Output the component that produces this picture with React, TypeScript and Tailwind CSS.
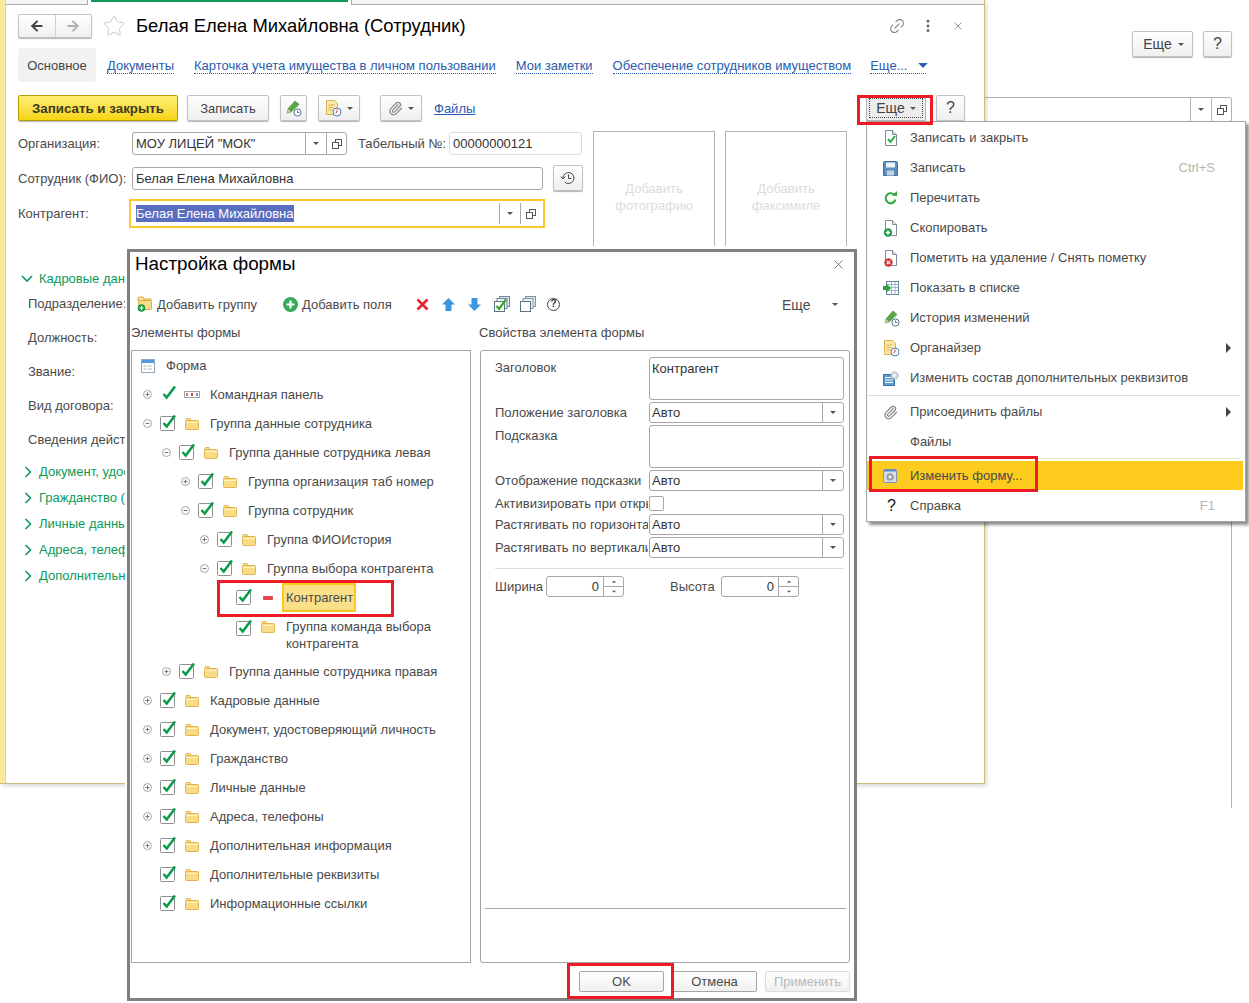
import React from 'react';
import { Link2, EllipsisVertical, X, Star, Paperclip, ArrowLeft, ArrowRight } from 'lucide-react';

// small shared bits
const Tri = ({ className = 'fill-[#555]' }: { className?: string }) => (
  <svg width="6" height="3" viewBox="0 0 7 4" preserveAspectRatio="none" className={className}><path d="M0 0h7L3.5 4z" /></svg>
);

const OpenIcon = () => (
  <svg width="10" height="10" viewBox="0 0 10 10" fill="white" stroke="#555"><rect x="3.5" y="0.5" width="6" height="6" /><rect x="0.5" y="3.5" width="6" height="6" /></svg>
);

const Folder = () => (
  <svg width="14" height="12" viewBox="0 0 14 12">
    <path d="M1 2.5V1.5Q1 .5 2 .5h3l1 2z" fill="#fbe3a0" stroke="#e2b54f" />
    <rect x="0.5" y="2.5" width="13" height="9" rx="1" fill="#fbdc86" stroke="#e2b54f" />
    <path d="M1 4.5h12" stroke="#fff3c8" />
  </svg>
);

const Check = ({ box = true }: { box?: boolean }) => (
  <svg width="18" height="20" viewBox="0 0 18 20" className="overflow-visible">
    {box && <rect x="0.5" y="5.5" width="14" height="14" rx="1" fill="white" stroke="#8f8f8f" />}
    <path d="M3.5 12l3.2 3.6L15 4.5" fill="none" stroke="#0b9a4b" strokeWidth="2.5" />
  </svg>
);

const Expander = ({ open }: { open: boolean }) => (
  <svg width="9" height="9" viewBox="0 0 9 9">
    <circle cx="4.5" cy="4.5" r="4" fill="white" stroke="#a5a5a5" />
    <path d={open ? 'M2.5 4.5h4' : 'M2.5 4.5h4M4.5 2.5v4'} stroke="#777" />
  </svg>
);

const ChevronRight = () => (
  <svg width="8" height="12" viewBox="0 0 8 12" fill="none" stroke="#0b9a5c" strokeWidth="1.6"><path d="M1.5 1l5 5-5 5" /></svg>
);
const ChevronDown = () => (
  <svg width="12" height="8" viewBox="0 0 12 8" fill="none" stroke="#0b9a5c" strokeWidth="1.6"><path d="M1 1l5 5 5-5" /></svg>
);

const Clock = ({ x, y }: { x: number; y: number }) => (
  <g>
    <circle cx={x} cy={y} r="3.6" fill="white" stroke="#55708f" />
    <path d={`M${x} ${y - 2}v2h2`} fill="none" stroke="#55708f" />
  </g>
);

const PencilClock = () => (
  <svg width="17" height="17" viewBox="0 0 17 17">
    <path d="M10 1l4 3.5L6 12 2 13l1-4z" fill="#5aa845" stroke="#3f8a33" strokeWidth="0.7" />
    <path d="M2 13l1-4 3 3z" fill="#d8c9a0" />
    <Clock x={12.5} y={12.5} />
  </svg>
);

const OrganizerIcon = () => (
  <svg width="17" height="17" viewBox="0 0 17 17">
    <path d="M1.5.5h8l3 3v11h-11z" fill="#fbe7a9" stroke="#d9b253" />
    <path d="M3.5 5h6M3.5 7.5h5M3.5 10h4" stroke="#d9b253" />
    <circle cx="12" cy="12" r="4" fill="white" stroke="#4f79b4" />
    <path d="M12 9.5V12l-1.5 1" fill="none" stroke="#d0453d" />
  </svg>
);

const DocBase = ({ children }: { children?: React.ReactNode }) => (
  <svg width="16" height="17" viewBox="0 0 16 17">
    <path d="M2.5.5h7l4 4v11h-11z" fill="white" stroke="#7e8c99" />
    <path d="M9.5.5v4h4" fill="#dfe6ec" stroke="#7e8c99" />
    {children}
  </svg>
);

const MENU_ICONS: Record<string, React.ReactNode> = {
  saveClose: <DocBase><path d="M5 9l2.5 3L12 6" fill="none" stroke="#2fa84a" strokeWidth="2" /></DocBase>,
  save: (
    <svg width="15" height="15" viewBox="0 0 15 15">
      <path d="M.5 1.5q0-1 1-1h12q1 0 1 1v13h-14z" fill="#5c8fc6" stroke="#3f6f9f" />
      <rect x="3" y="1.5" width="9" height="5" fill="#eef4f9" />
      <rect x="4" y="9.5" width="7" height="5" fill="#c9d3dc" />
    </svg>
  ),
  refresh: (
    <svg width="15" height="15" viewBox="0 0 15 15" fill="none">
      <path d="M12.5 8.5a5 5 0 1 1-1.5-5" stroke="#2fa83a" strokeWidth="2" />
      <path d="M9 4.8l5 .2V0z" fill="#2fa83a" />
    </svg>
  ),
  copy: <DocBase><circle cx="5" cy="12.5" r="4.2" fill="#1f9a46" /><path d="M2.8 12.5h4.4M5 10.3v4.4" stroke="white" strokeWidth="1.4" /></DocBase>,
  del: <DocBase><circle cx="5.5" cy="12.5" r="4.2" fill="#d1383a" /><path d="M3.8 10.8l3.4 3.4m0-3.4l-3.4 3.4" stroke="white" strokeWidth="1.2" /></DocBase>,
  list: (
    <svg width="16" height="14" viewBox="0 0 16 14">
      <rect x="3.5" y="0.5" width="12" height="13" fill="white" stroke="#5f7f9c" />
      <path d="M3.5 3.5h12M3.5 6.5h12M3.5 9.5h12M8.5 .5v13M12 .5v13" stroke="#9fb6c9" />
      <path d="M0 5h3.5V2.5L8 7l-4.5 4.5V9H0z" fill="#2ca33b" />
    </svg>
  ),
  history: <PencilClock />,
  organizer: <OrganizerIcon />,
  requisites: (
    <svg width="16" height="15" viewBox="0 0 16 15">
      <rect x="0.5" y="3.5" width="11" height="11" fill="#5d9ad3" stroke="#3a72a8" />
      <path d="M2 6.5h8M2 9h8M2 11.5h8" stroke="white" />
      <circle cx="11.5" cy="4.5" r="3.6" fill="#d7dadd" stroke="#8d9297" strokeDasharray="1.5 1" />
      <circle cx="11.5" cy="4.5" r="1.2" fill="white" />
    </svg>
  ),
  clip: <Paperclip size={15} strokeWidth={2} className="text-[#8a8a8a]" />,
  form: (
    <svg width="14" height="14" viewBox="0 0 14 14">
      <rect x="0.5" y="0.5" width="13" height="13" rx="1" fill="#d6dde6" stroke="#7d94ae" />
      <path d="M1 1.5h12" stroke="#5c8fc6" strokeWidth="2" />
      <circle cx="7" cy="8" r="3.2" fill="#aab0b6" stroke="#8b9096" />
      <circle cx="7" cy="8" r="1.2" fill="white" />
    </svg>
  ),
  help: <span className="pl-[4px] text-[16px] text-[#111] leading-none">?</span>,
};

const MENU_TOP = [
  { icon: 'saveClose', label: 'Записать и закрыть' },
  { icon: 'save', label: 'Записать', hint: 'Ctrl+S' },
  { icon: 'refresh', label: 'Перечитать' },
  { icon: 'copy', label: 'Скопировать' },
  { icon: 'del', label: 'Пометить на удаление / Снять пометку' },
  { icon: 'list', label: 'Показать в списке' },
  { icon: 'history', label: 'История изменений' },
  { icon: 'organizer', label: 'Органайзер', sub: true },
  { icon: 'requisites', label: 'Изменить состав дополнительных реквизитов' },
];

const MenuItem = ({ icon, label, hint, sub, active }: { icon?: string; label: string; hint?: string; sub?: boolean; active?: boolean }) => (
  <div className={`flex items-center pl-[16px] pr-[14px] ${active ? 'h-[29px] bg-[#fccb1e] mr-[2px]' : 'h-[30px]'}`}>
    <span className="w-[27px] flex items-center">{icon && MENU_ICONS[icon]}</span>
    <span className="flex-1 whitespace-nowrap">{label}</span>
    {hint && <span className="text-[#b5b5b5] mr-[16px]">{hint}</span>}
    {sub && <span className="w-0 h-0 border-y-[5px] border-y-transparent border-l-[5px] border-l-[#444]" />}
  </div>
);

const TextField = ({ value, className = '' }: { value: string; className?: string }) => (
  <div className={`h-[23px] flex items-center px-[3px] border border-[#a8a8a8] rounded-[3px] bg-white text-[#333] ${className}`}>{value}</div>
);

const Combo = ({ value, className = '', selected }: { value: string; className?: string; selected?: boolean }) => (
  <div className={`flex items-center bg-white ${className}`}>
    <span className="flex-1 pl-[3px] text-[#333] whitespace-nowrap">
      {selected ? <span className="bg-[#5a6ec0] text-white py-[1px]">{value}</span> : value}
    </span>
    <span className="h-full w-[21px] border-l border-[#a8a8a8] flex items-center justify-center"><Tri /></span>
    <span className="h-full w-[20px] border-l border-[#a8a8a8] flex items-center justify-center"><OpenIcon /></span>
  </div>
);

const Btn = ({ children, className = '' }: { children: React.ReactNode; className?: string }) => (
  <div className={`h-[26px] flex items-center justify-center gap-[5px] border border-[#c2c2c2] rounded-[2px] bg-gradient-to-b from-white to-[#efefef] shadow-[0_1px_1px_rgba(0,0,0,0.3)] text-[#444] ${className}`}>{children}</div>
);

const TopLink = ({ children, className = '' }: { children: React.ReactNode; className?: string }) => (
  <a className={`mt-[2px] border-b border-dotted border-[#2a5cb0] text-[#2a5cb0] leading-[15px] whitespace-nowrap ${className}`}>{children}</a>
);

const PhotoBox = ({ lines }: { lines: string[] }) => (
  <div className="w-[122px] h-[115px] border-x border-t border-[#b3b3b3] pt-[48px] text-center text-[#dcdcdc] leading-[17px]">
    {lines.map(l => <div key={l}>{l}</div>)}
  </div>
);

const SECTION_LABELS = ['Подразделение:', 'Должность:', 'Звание:', 'Вид договора:', 'Сведения действия'];
const CLOSED_SECTIONS = ['Документ, удостоверяющий', 'Гражданство (ГРАЖДАНСТВО)', 'Личные данные', 'Адреса, телефоны', 'Дополнительная информация'];

type Node = { level: number; label: string; exp?: 'open' | 'closed'; h?: boolean };
const TREE: Node[] = [
  { level: 0, label: 'Группа данные сотрудника', exp: 'open' },
  { level: 1, label: 'Группа данные сотрудника левая', exp: 'open' },
  { level: 2, label: 'Группа организация таб номер', exp: 'closed' },
  { level: 2, label: 'Группа сотрудник', exp: 'open' },
  { level: 3, label: 'Группа ФИОИстория', exp: 'closed' },
  { level: 3, label: 'Группа выбора контрагента', exp: 'open' },
];
const TREE_BOTTOM: Node[] = [
  { level: 1, label: 'Группа данные сотрудника правая', exp: 'closed' },
  { level: 0, label: 'Кадровые данные', exp: 'closed' },
  { level: 0, label: 'Документ, удостоверяющий личность', exp: 'closed' },
  { level: 0, label: 'Гражданство', exp: 'closed' },
  { level: 0, label: 'Личные данные', exp: 'closed' },
  { level: 0, label: 'Адреса, телефоны', exp: 'closed' },
  { level: 0, label: 'Дополнительная информация', exp: 'closed' },
  { level: 0, label: 'Дополнительные реквизиты' },
  { level: 0, label: 'Информационные ссылки' },
];

const indentClass = ['pl-[11px]', 'pl-[30px]', 'pl-[49px]', 'pl-[68px]', 'pl-[87px]'];

const TreeRow = ({ node }: { node: Node }) => (
  <div className={`h-[29px] flex items-center ${indentClass[node.level]}`}>
    <span className="w-[17px] flex">{node.exp && <Expander open={node.exp === 'open'} />}</span>
    <span className="w-[25px] h-[20px] -mt-[5px] flex"><Check /></span>
    <span className="w-[25px] flex"><Folder /></span>
    <span className="whitespace-nowrap">{node.label}</span>
  </div>
);

const PropRow = ({ label, children, className = '', top }: { label: string; children: React.ReactNode; className?: string; top?: boolean }) => (
  <div className={`flex ${top ? 'items-start' : 'items-center'} ${className}`}>
    <span className={`w-[153px] mr-[1px] overflow-hidden whitespace-nowrap ${top ? 'pt-[1px]' : ''}`}>{label}</span>
    {children}
  </div>
);

const AutoSelect = () => (
  <div className="w-[195px] h-[21px] flex items-center border border-[#a8a8a8] rounded-[3px] text-[#333]">
    <span className="flex-1 pl-[2px] pt-[1px]">Авто</span>
    <span className="h-full w-[21px] border-l border-[#a8a8a8] flex items-center justify-center"><Tri /></span>
  </div>
);

const Spinner = () => (
  <div className="w-[78px] h-[21px] flex border border-[#a8a8a8] rounded-[3px] text-[#333]">
    <span className="w-[56px] text-right pr-[4px] leading-[20px]">0</span>
    <span className="flex-1 border-l border-[#a8a8a8] flex flex-col">
      <span className="flex-1 flex items-center justify-center"><Tri className="fill-[#555] rotate-180 scale-75" /></span>
      <span className="h-px bg-[#a8a8a8]" />
      <span className="flex-1 flex items-center justify-center"><Tri className="fill-[#555] scale-75" /></span>
    </span>
  </div>
);

const DlgBtn = ({ children, className = '' }: { children: React.ReactNode; className?: string }) => (
  <div className={`w-[85px] h-[21px] flex items-center justify-center border rounded-[2px] bg-gradient-to-b from-white to-[#f0f0f0] ${className}`}>{children}</div>
);

const FormWindow = () => (
  <div className="absolute left-0 top-0 w-[985px] h-[784px] flex bg-white border-r border-b border-[#c9bb77] shadow-[2px_2px_4px_rgba(0,0,0,0.15)] overflow-hidden">
    <div className="w-[6px] shrink-0 bg-[#fbe99b] border-r border-[#e8d67f]" />
    <div className="flex-1 flex flex-col">
      {/* open tabs strip */}
      <div className="h-[5px] flex bg-[#f4f4f4] border-b border-[#a9a9a9]">
        <div className="ml-[81px] w-[265px] h-[5px] bg-white border-x border-[#a9a9a9] px-[3px]">
          <div className="h-[2px] bg-[#109a58]" />
        </div>
      </div>

      <div className="pl-[12px] pr-[19px] flex flex-col">
        <div className="mt-[9px] h-[24px] flex items-center">
          <div className="w-[74px] h-[24px] flex border border-[#c2c2c2] rounded-[2px] bg-gradient-to-b from-white to-[#efefef] shadow-[0_1px_1px_rgba(0,0,0,0.3)]">
            <span className="flex-1 flex items-center justify-center border-r border-[#cfcfcf]"><ArrowLeft size={16} strokeWidth={3} className="text-[#444]" /></span>
            <span className="flex-1 flex items-center justify-center"><ArrowRight size={16} strokeWidth={3} className="text-[#b0b0b0]" /></span>
          </div>
          <Star size={24} strokeWidth={1} className="ml-[10px] text-[#c9c9c9]" />
          <h1 className="ml-[10px] text-[18.4px] font-normal text-black whitespace-nowrap">Белая Елена Михайловна (Сотрудник)</h1>
          <div className="ml-auto flex items-center text-[#777]">
            <Link2 size={18} strokeWidth={1.4} className="-rotate-45 mr-[14px]" />
            <EllipsisVertical size={16} strokeWidth={2.4} className="mr-[16px] text-[#666]" />
            <X size={12} strokeWidth={1.5} className="mr-[1px]" />
          </div>
        </div>

        <div className="mt-[10px] h-[34px] flex items-center">
          <div className="w-[78px] h-[34px] pt-[2px] flex items-center justify-center bg-[#f2f2f2] rounded-[3px] text-[#444]">Основное</div>
          <TopLink className="ml-[11px]">Документы</TopLink>
          <TopLink className="ml-[20px]">Карточка учета имущества в личном пользовании</TopLink>
          <TopLink className="ml-[20px]">Мои заметки</TopLink>
          <TopLink className="ml-[20px]">Обеспечение сотрудников имуществом</TopLink>
          <TopLink className="ml-[19px] flex items-center">Еще...<span className="ml-[13px] flex"><Tri className="fill-[#2a5cb0] scale-[1.6]" /></span></TopLink>
        </div>

        <div className="mt-[13px] h-[26px] flex items-center">
          <div className="w-[160px] h-[26px] pt-[2px] flex items-center justify-center border border-[#b39c00] rounded-[2px] bg-gradient-to-b from-[#ffee70] to-[#f6d400] shadow-[0_1px_1px_rgba(0,0,0,0.3)] font-bold text-[13.33px] text-[#3c3a1e]">Записать и закрыть</div>
          <Btn className="w-[82px] ml-[9px] pt-[2px]">Записать</Btn>
          <Btn className="w-[27px] ml-[11px]"><PencilClock /></Btn>
          <Btn className="w-[42px] ml-[11px]"><OrganizerIcon /><Tri /></Btn>
          <Btn className="w-[42px] ml-[20px]"><Paperclip size={15} strokeWidth={2} className="text-[#8a8a8a]" /><Tri /></Btn>
          <a className="ml-[12px] mt-[2px] text-[#2a5cb0] underline">Файлы</a>
          <div className="ml-auto flex items-center">
            <div className="w-[60px] h-[26px] p-[2px] border border-[#b5b5b5] rounded-[2px] bg-[#ececec] shadow-[0_1px_1px_rgba(0,0,0,0.3)]">
              <div className="h-full flex items-center justify-center gap-[5px] border border-dotted border-[#444] text-[#444] text-[14px]">Еще <Tri /></div>
            </div>
            <Btn className="w-[29px] ml-[10px] text-[16px] text-[#222]">?</Btn>
          </div>
        </div>

        <div className="mt-[10px] flex items-start">
          <div className="w-[565px] mr-[10px] h-[115px] pt-[1px] flex flex-col">
            <div className="flex items-center">
              <span className="w-[114px]">Организация:</span>
              <Combo value='МОУ ЛИЦЕЙ "МОК"' className="w-[215px] h-[23px] border border-[#a8a8a8] rounded-[3px]" />
              <span className="ml-[11px] w-[91px]">Табельный №:</span>
              <TextField value="00000000121" className="w-[133px] !border-[#dcdcdc]" />
            </div>
            <div className="mt-[10px] flex items-center">
              <span className="w-[114px] mt-[2px]">Сотрудник (ФИО):</span>
              <TextField value="Белая Елена Михайловна" className="w-[411px] pt-[2px]" />
              <Btn className="w-[30px] ml-[10px]">
                <svg width="16" height="16" viewBox="0 0 16 16" fill="none" stroke="#444"><path d="M3 8a5.5 5.5 0 1 1 1.6 3.9" /><path d="M8.5 4.5V8.5h3" /><path d="M.8 6.5L3 9l2.2-2.5" /></svg>
              </Btn>
            </div>
            <div className="mt-[8px] flex items-center">
              <span className="w-[111px]">Контрагент:</span>
              <Combo value="Белая Елена Михайловна" selected className="w-[416px] h-[29px] border-2 border-[#fbc82e] pl-[2px] pr-[3px] py-[2px]" />
            </div>
          </div>
          <PhotoBox lines={['Добавить', 'фотографию']} />
          <div className="w-[10px]" />
          <PhotoBox lines={['Добавить', 'факсимиле']} />
        </div>

        <div className="mt-[24px] h-[17px] flex items-center text-[#0b9a5c]">
          <span className="w-[21px] pl-[3px] flex"><ChevronDown /></span>
          <span>Кадровые данные</span>
        </div>
        <div className="pl-[10px]">
          {SECTION_LABELS.map(s => <div key={s} className="h-[34px] flex items-center whitespace-nowrap">{s}</div>)}
        </div>
        <div className="mt-[2px]">
          {CLOSED_SECTIONS.map(s => (
            <div key={s} className="h-[26px] flex items-center text-[#0b9a5c] whitespace-nowrap">
              <span className="w-[21px] pl-[6px] flex"><ChevronRight /></span>
              <span>{s}</span>
            </div>
          ))}
        </div>
      </div>
    </div>
  </div>
);

const BackWindow = () => (
  <div className="absolute left-[985px] top-0 w-[247px] h-[808px] flex flex-col">
    <div className="mt-[31px] flex justify-end">
      <Btn className="w-[61px] pl-[2px] gap-[6px] text-[14px]">Еще <Tri /></Btn>
      <Btn className="w-[29px] ml-[10px] text-[16px] text-[#222]">?</Btn>
    </div>
    <div className="mt-[40px] h-[25px] flex items-center border-y border-r border-[#b3b3b3] rounded-r-[3px]">
      <span className="flex-1" />
      <span className="h-full w-[21px] border-l border-[#b3b3b3] flex items-center justify-center"><Tri /></span>
      <span className="h-full w-[20px] border-l border-[#b3b3b3] flex items-center justify-center"><OpenIcon /></span>
    </div>
    <div className="flex-1 border-r border-[#b3b3b3]" />
  </div>
);

const FormSettingsDialog = () => (
  <div className="absolute left-[125px] top-[246px] pl-[2px] pt-[3px] bg-white">
    <div className="w-[730px] h-[752px] border-[3px] border-[#808080] bg-white flex flex-col">
      <div className="h-[24px] pl-[5px] pr-[8px] flex items-center justify-between">
        <h2 className="text-[18.8px] font-normal text-black">Настройка формы</h2>
        <X size={15} strokeWidth={1.2} className="text-[#555]" />
      </div>

      <div className="mt-[18px] h-[20px] pl-[7px] flex items-center">
        <svg width="16" height="16" viewBox="0 0 16 16" className="mr-[4px]">
          <path d="M1 5V2q0-1 1-1h4l1 2h7v3z" fill="#fbe3a0" stroke="#d9ad45" />
          <rect x="1.5" y="4.5" width="13" height="9" rx="1" fill="#fbdc86" stroke="#d9ad45" />
          <circle cx="4.5" cy="12" r="3.8" fill="#1f9a46" />
          <path d="M2.5 12h4M4.5 10v4" stroke="white" />
        </svg>
        <span className="w-[126px] mt-[2px] whitespace-nowrap">Добавить группу</span>
        <svg width="15" height="15" viewBox="0 0 15 15" className="mr-[4px]">
          <circle cx="7.5" cy="7.5" r="7.5" fill="#39a85a" />
          <path d="M3.5 7.5h8M7.5 3.5v8" stroke="white" strokeWidth="2.2" />
        </svg>
        <span className="w-[114px] mt-[2px] whitespace-nowrap">Добавить поля</span>
        <svg width="13" height="13" viewBox="0 0 13 13" className="mr-[13px]"><path d="M1.5 1.5l10 10m0-10l-10 10" stroke="#e3262b" strokeWidth="2.6" /></svg>
        <svg width="13" height="13" viewBox="0 0 13 13" className="mr-[13px]"><path d="M6.5 0L13 6.5H9.5V13h-6V6.5H0z" fill="#3b97dd" /></svg>
        <svg width="13" height="13" viewBox="0 0 13 13" className="mr-[13px]"><path d="M6.5 13L13 6.5H9.5V0h-6v6.5H0z" fill="#3b97dd" /></svg>
        <svg width="16" height="16" viewBox="0 0 16 16" className="mr-[10px]">
          <rect x="5.5" y="0.5" width="10" height="10" fill="#dfe8ef" stroke="#6f8797" />
          <rect x="3" y="2.5" width="10" height="10" fill="#eef3f6" stroke="#6f8797" />
          <rect x="0.5" y="5.5" width="10" height="10" fill="white" stroke="#5b7483" />
          <path d="M2.5 10l2.5 3L12 3.5" fill="none" stroke="#3aa82a" strokeWidth="2.2" />
        </svg>
        <svg width="16" height="16" viewBox="0 0 16 16" className="mr-[11px]">
          <rect x="5.5" y="0.5" width="10" height="10" fill="#dfe8ef" stroke="#7f95a4" />
          <rect x="3" y="2.5" width="10" height="10" fill="#eef3f6" stroke="#7f95a4" />
          <rect x="0.5" y="5.5" width="10" height="10" fill="white" stroke="#5b7483" />
        </svg>
        <span className="w-[13px] h-[13px] rounded-full border border-[#444] flex items-center justify-center text-[10px] font-bold text-[#333] leading-none">?</span>
        <span className="ml-[222px] mt-[2px] text-[14px]">Еще</span>
        <span className="ml-[21px] flex"><Tri /></span>
      </div>

      <div className="mt-[10px] h-[17px] pl-[1px] flex items-center">
        <span className="w-[348px]">Элементы формы</span>
        <span>Свойства элемента формы</span>
      </div>

      <div className="mt-[9px] h-[613px] pl-[1px] flex">
        <div className="w-[340px] h-full border border-[#a5a5a5]">
          <div className="h-[29px] pl-[9px] flex items-center">
            <span className="w-[25px] flex">
              <svg width="14" height="14" viewBox="0 0 14 14">
                <rect x="0.5" y="0.5" width="13" height="13" fill="white" stroke="#8fa7bd" />
                <path d="M1 2.5h12" stroke="#4f9ae0" strokeWidth="3" />
                <path d="M2.5 7h3M7 7h4M2.5 10h3M7 10h4" stroke="#a9b9c6" />
              </svg>
            </span>
            <span>Форма</span>
          </div>
          <div className="h-[29px] pl-[11px] flex items-center">
            <span className="w-[17px] flex"><Expander open={false} /></span>
            <span className="w-[24px] h-[20px] -mt-[5px] flex"><Check box={false} /></span>
            <span className="w-[26px] flex">
              <svg width="16" height="7" viewBox="0 0 16 7">
                <rect x="0.5" y="0.5" width="15" height="6" fill="white" stroke="#98a4ae" />
                <path d="M3 2v3" stroke="#d97b4a" strokeWidth="2" />
                <path d="M8 2v3" stroke="#d9534a" strokeWidth="2" />
                <path d="M13 2v3" stroke="#7c93c9" strokeWidth="2" />
              </svg>
            </span>
            <span>Командная панель</span>
          </div>
          {TREE.map(n => <TreeRow key={n.label} node={n} />)}
          <div className="h-[29px] pl-[104px] flex items-center">
            <span className="w-[25px] h-[20px] -mt-[5px] flex"><Check /></span>
            <span className="w-[22px] flex"><span className="w-[10px] h-[4px] ml-[2px] rounded-[1px] bg-[#e0484c]" /></span>
            <span className="w-[74px] h-[29px] flex items-center px-[2px] border-2 border-[#fbc71c] bg-[#fbe08a] -ml-[1px] whitespace-nowrap">Контрагент</span>
          </div>
          <div className="h-[45px] pl-[104px] pt-[6px] flex items-start">
            <span className="w-[25px] h-[20px] -mt-[2px] flex"><Check /></span>
            <span className="w-[25px] mt-[3px] flex"><Folder /></span>
            <span className="w-[160px] leading-[17px]">Группа команда выбора контрагента</span>
          </div>
          {TREE_BOTTOM.map(n => <TreeRow key={n.label} node={n} />)}
        </div>

        <div className="ml-[9px] w-[370px] h-full border border-[#a5a5a5] rounded-[3px] pl-[14px] pr-[5px] pt-[6px] flex flex-col">
          <PropRow label="Заголовок" top>
            <div className="w-[195px] h-[43px] border border-[#a8a8a8] rounded-[3px] pl-[2px] pt-[1px] text-[#333]">Контрагент</div>
          </PropRow>
          <PropRow label="Положение заголовка" className="mt-[2px]"><AutoSelect /></PropRow>
          <PropRow label="Подсказка" top className="mt-[2px]">
            <div className="w-[195px] h-[43px] border border-[#a8a8a8] rounded-[3px]" />
          </PropRow>
          <PropRow label="Отображение подсказки" className="mt-[2px]"><AutoSelect /></PropRow>
          <PropRow label="Активизировать при открытии" className="mt-[2px] h-[21px]">
            <span className="w-[15px] h-[15px] border border-[#a8a8a8] rounded-[2px]" />
          </PropRow>
          <PropRow label="Растягивать по горизонтали"><AutoSelect /></PropRow>
          <PropRow label="Растягивать по вертикали" className="mt-[2px]"><AutoSelect /></PropRow>
          <div className="mt-[10px] h-px bg-[#dcdcdc]" />
          <div className="mt-[7px] flex items-center">
            <span className="w-[51px]">Ширина</span>
            <Spinner />
            <span className="ml-[46px] w-[51px]">Высота</span>
            <Spinner />
          </div>
          <div className="mt-[311px] -ml-[10px] -mr-[2px] h-px bg-[#a5a5a5]" />
        </div>
      </div>

      <div className="mt-[8px] pr-[4px] flex justify-end items-center">
        <DlgBtn className="border-[#a5a5a5]">OK</DlgBtn>
        <DlgBtn className="ml-[8px] border-[#a5a5a5]">Отмена</DlgBtn>
        <DlgBtn className="ml-[8px] border-[#dcdcdc] text-[#b8b8b8]">Применить</DlgBtn>
      </div>
    </div>
  </div>
);

const ActionsMenu = () => (
  <div className="absolute left-[866px] top-[121px] w-[380px] h-[401px] pt-[1px] bg-white border border-[#a5a5a5] shadow-[3px_3px_3px_rgba(0,0,0,0.45)]">
    {MENU_TOP.map(m => <MenuItem key={m.label} {...m} />)}
    <div className="h-[4px] flex items-center pr-[5px]"><div className="flex-1 h-px bg-[#e4e0d0]" /></div>
    <MenuItem icon="clip" label="Присоединить файлы" sub />
    <MenuItem label="Файлы" />
    <div className="h-[4px] pt-[1px] pr-[5px]"><div className="h-px bg-[#e4e0d0]" /></div>
    <MenuItem icon="form" label="Изменить форму..." active />
    <div className="pt-[1px]"><MenuItem icon="help" label="Справка" hint="F1" /></div>
  </div>
);

export default function App() {
  return (
    <div className="relative w-[1249px] h-[1003px] overflow-hidden bg-white font-['Liberation_Sans',Arial,sans-serif] text-[13px] text-[#4a4a4a]">
      <BackWindow />
      <FormWindow />
      <FormSettingsDialog />
      <ActionsMenu />
      {/* red callouts drawn over the screenshot */}
      <div className="absolute left-[857px] top-[95px] w-[76px] h-[30px] border-[3px] border-[#ed1c24]" />
      <div className="absolute left-[869px] top-[456px] w-[169px] h-[36px] border-[3px] border-[#ed1c24]" />
      <div className="absolute left-[217px] top-[580px] w-[177px] h-[37px] border-[3px] border-[#ed1c24]" />
      <div className="absolute left-[567px] top-[963px] w-[107px] h-[36px] border-[3px] border-[#ed1c24]" />
    </div>
  );
}
